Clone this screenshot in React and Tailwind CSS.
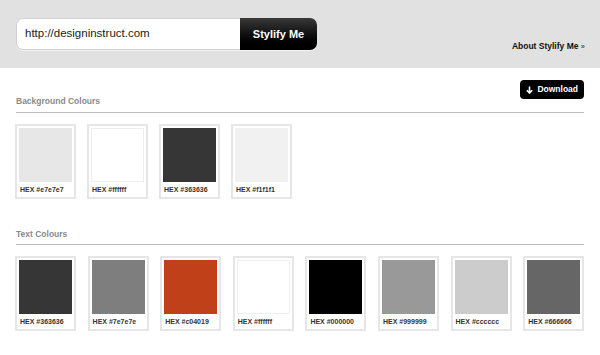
import React from "react";

const bg = ["e7e7e7", "ffffff", "363636", "f1f1f1"];
const tx = ["363636", "7e7e7e", "c04019", "ffffff", "000000", "999999", "cccccc", "666666"];
const swatchCls = {
  e7e7e7: "bg-[#e7e7e7]",
  ffffff: "bg-[#ffffff] border border-[#eeeeee]",
  "363636": "bg-[#363636]",
  f1f1f1: "bg-[#f1f1f1]",
  "7e7e7e": "bg-[#7e7e7e]",
  c04019: "bg-[#c04019]",
  "000000": "bg-[#000000]",
  "999999": "bg-[#999999]",
  cccccc: "bg-[#cccccc]",
  "666666": "bg-[#666666]",
};

function Card({ hex }) {
  return (
    <div className="w-[61px] h-[75px] border-2 border-[#e6e6e6] p-[2px] flex flex-col shrink-0">
      <div className={"w-[53px] h-[54px] " + swatchCls[hex]}></div>
      <div className="mt-[3px] pl-[1px] text-[7px] leading-[10px] font-bold text-[#333] whitespace-nowrap">
        HEX #{hex}
      </div>
    </div>
  );
}

export default function App() {
  return (
    <div className="w-[600px] h-[355px] bg-white overflow-hidden font-['Liberation_Sans',Arial,sans-serif]">
      <div className="h-[68px] bg-[#e1e1e1] flex items-start justify-between pl-4 pr-[15px] pt-[18px]">
        <div className="flex h-[32px] w-[301px] rounded-[7px] overflow-hidden shadow-[0_1px_0_rgba(255,255,255,0.6)]">
          <div className="w-[224px] bg-white pl-[8px] flex items-center text-[11.5px] text-[#1a1a1a] rounded-l-[7px] border border-r-0 border-[#d0d0d0]">
            http://designinstruct.com
          </div>
          <div className="flex-1 bg-gradient-to-b from-[#3a3a3a] via-[#111] to-black text-white font-bold text-[11px] flex items-center justify-center">
            Stylify Me
          </div>
        </div>
        <div className="mt-[22px] text-[8.5px] font-bold text-[#111]">
          About Stylify Me <span className="text-[#555] text-[7.5px]">»</span>
        </div>
      </div>

      <div className="pl-4 pr-4">
        <div className="flex justify-between items-end pt-[12px] pb-[5px] border-b border-[#bdbdbd]">
          <div className="text-[8.5px] leading-[11px] font-bold text-[#8a8a8a]">Background Colours</div>
          <div className="h-[19px] mb-[8px] bg-black rounded-[4px] px-[6px] flex items-center gap-[4px] text-white text-[8.5px] font-bold">
            <svg width="7" height="8" viewBox="0 0 7 8" fill="none" stroke="white" strokeWidth="1.6">
              <path d="M3.5 0.5V7M0.8 4.2L3.5 7L6.2 4.2" />
            </svg>
            Download
          </div>
        </div>
        <div className="flex gap-[11px] mt-[11px] -ml-[1px]">
          {bg.map((h) => (
            <Card key={h} hex={h} />
          ))}
        </div>

        <div className="mt-[30px] pb-[4px] border-b border-[#bdbdbd] text-[8.5px] leading-[11px] font-bold text-[#8a8a8a]">
          Text Colours
        </div>
        <div className="flex gap-[11.6px] mt-[11px] -ml-[1px]">
          {tx.map((h) => (
            <Card key={h} hex={h} />
          ))}
        </div>
      </div>
    </div>
  );
}
